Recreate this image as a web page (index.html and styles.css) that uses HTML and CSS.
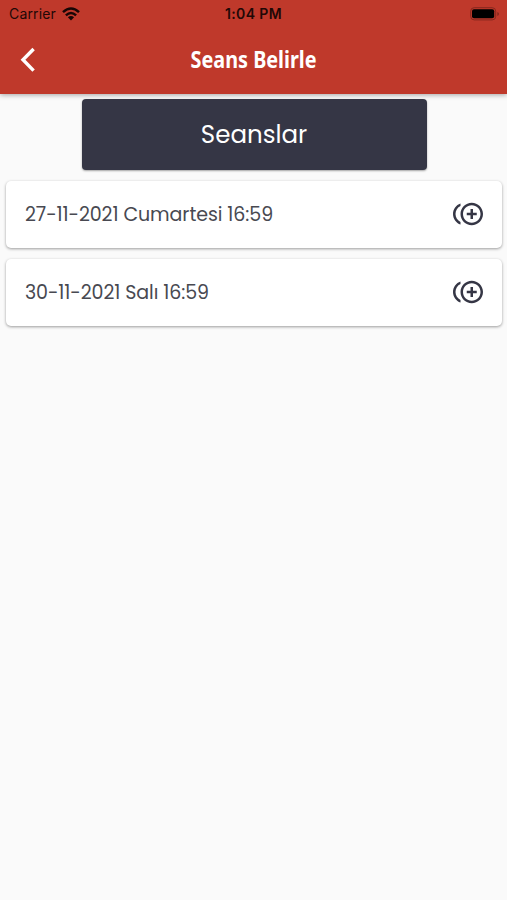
FILE: index.html
```html
<!DOCTYPE html>
<html lang="tr">
<head>
<meta charset="utf-8">
<title>Seans Belirle</title>
<link rel="stylesheet" href="styles.css">
</head>
<body>
<header class="app-bar">
  <div class="status">
    <div class="carrier"><span class="carrier-name">Carrier</span>
      <svg class="wifi" viewBox="0 0 18 14" fill="none" stroke="#180605" stroke-width="2.5"><path d="M1 5.2Q9-2.2 17 5.2M3.9 8.3Q9 3.6 14.1 8.3"/><path d="M5.9 10.3Q9 7.7 12.1 10.3L9 13.6Z" fill="#180605" stroke="none"/></svg>
    </div>
    <span class="clock">1:04 PM</span>
    <svg class="battery" viewBox="0 0 30 14"><rect x=".7" y=".7" width="25" height="12.2" rx="3.5" fill="none" stroke="#85281e"/><rect x="2" y="2.3" width="22.2" height="9" rx="2" fill="#000"/><path d="M27.3 5v4q1.7-.6 1.7-2t-1.7-2z" fill="#85281e"/></svg>
  </div>
  <div class="nav">
    <svg class="back" viewBox="0 0 16 26" fill="none" stroke="#fff" stroke-width="3.4"><path d="M13.6 2 3 12.8l10.6 10.8"/></svg>
    <h1 class="title">Seans Belirle</h1>
  </div>
</header>
<main class="content">
  <div class="heading"><span class="heading-text">Seanslar</span></div>
  <div class="card">
    <span class="date">27-11-2021 Cumartesi 16:59</span>
    <svg class="add" viewBox="0 0 24 24"><path d="M16 8h-2v3h-3v2h3v3h2v-3h3v-2h-3zM2 12c0-2.79 1.64-5.2 4.01-6.32V3.52C2.52 4.76 0 8.09 0 12s2.52 7.24 6.01 8.48v-2.16C3.64 17.2 2 14.79 2 12zm13-9c-4.96 0-9 4.04-9 9s4.04 9 9 9 9-4.04 9-9-4.04-9-9-9zm0 16c-3.86 0-7-3.14-7-7s3.14-7 7-7 7 3.14 7 7-3.14 7-7 7z"/></svg>
  </div>
  <div class="card">
    <span class="date">30-11-2021 Salı 16:59</span>
    <svg class="add" viewBox="0 0 24 24"><path d="M16 8h-2v3h-3v2h3v3h2v-3h3v-2h-3zM2 12c0-2.79 1.64-5.2 4.01-6.32V3.52C2.52 4.76 0 8.09 0 12s2.52 7.24 6.01 8.48v-2.16C3.64 17.2 2 14.79 2 12zm13-9c-4.96 0-9 4.04-9 9s4.04 9 9 9 9-4.04 9-9-4.04-9-9-9zm0 16c-3.86 0-7-3.14-7-7s3.14-7 7-7 7 3.14 7 7-3.14 7-7 7z"/></svg>
  </div>
</main>
</body>
</html>
```
FILE: styles.css
```css
* { box-sizing: border-box; }
body { margin: 0; min-height: 100vh; background: #fafafa; font-family: Poppins, Inter, sans-serif; }
svg { display: block; flex: none; }
.app-bar { height: 94px; background: #bf392b; box-shadow: 0 1px 5px rgba(0,0,0,.35); }
.status { height: 27px; padding: 0 7px 0 9px; display: grid; grid-template-columns: 1fr auto 1fr; align-items: center; color: #210806; font: 14px/27px Inter, sans-serif; }
.carrier { display: flex; align-items: center; gap: 6px; }
.carrier-name { letter-spacing: .15px; }
.wifi { width: 18px; height: 14px; }
.clock { font-weight: 600; font-size: 14px; letter-spacing: .4px; margin-right: 2px; }
.battery { width: 30px; height: 14px; justify-self: end; }
.nav { height: 66px; display: grid; grid-template-columns: 60px 1fr 60px; align-items: center; }
.back { width: 16px; height: 26px; margin-left: 20px; }
.title { margin: 0; justify-self: center; color: #fff; font: 700 22.5px/32px "Noto Sans", sans-serif; white-space: nowrap; transform: scaleX(.88); }
.content { padding: 5px 5px 0 6px; display: flex; flex-direction: column; gap: 11px; }
.heading { width: 345px; height: 71px; align-self: center; display: flex; align-items: center; justify-content: center; background: #353645; border-radius: 4px; box-shadow: 0 1px 2px rgba(0,0,0,.35); color: #fff; }
.heading-text { font-family: Poppins, Inter, sans-serif; font-size: 24.5px; font-feature-settings: "cv11"; }
.card { height: 67px; padding: 0 19px; display: flex; align-items: center; justify-content: space-between; background: #fff; border-radius: 5px; box-shadow: 0 1px 3px rgba(0,0,0,.38); color: #484951; }
.date { font-size: 19px; white-space: nowrap; letter-spacing: -.08px; font-feature-settings: "cv11"; }
.add { width: 30px; height: 30px; margin-bottom: 2px; fill: #353645; }
```
